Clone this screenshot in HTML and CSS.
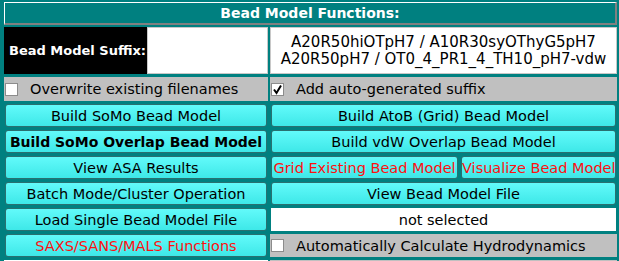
FILE: index.html
```html
<!DOCTYPE html>
<html lang="en">
<head>
    <meta charset="UTF-8">
    <title>Bead Model Functions</title>
    <link rel="stylesheet" href="styles.css">
</head>
<body>
    <div class="panel">
        <div class="panel-title">Bead Model Functions:</div>

        <div class="grid">
            <!-- suffix row -->
            <div class="suffix">
                <div class="suffix-label">Bead Model Suffix:</div>
                <div class="suffix-input"></div>
            </div>
            <div class="suffix-value">
                <div>A20R50hiOTpH7 / A10R30syOThyG5pH7</div>
                <div>A20R50pH7 / OT0_4_PR1_4_TH10_pH7-vdw</div>
            </div>

            <!-- options -->
            <label class="check-row">
                <span class="checkbox"></span>
                <span>Overwrite existing filenames</span>
            </label>
            <label class="check-row">
                <span class="checkbox">
                    <svg width="11" height="11" viewBox="0 0 11 11"><polyline points="2,5.5 4.5,9 9,1.5" fill="none" stroke="#000" stroke-width="2"/></svg>
                </span>
                <span>Add auto-generated suffix</span>
            </label>

            <!-- actions -->
            <button class="btn">Build SoMo Bead Model</button>
            <button class="btn">Build AtoB (Grid) Bead Model</button>

            <button class="btn btn-bold">Build SoMo Overlap Bead Model</button>
            <button class="btn">Build vdW Overlap Bead Model</button>

            <button class="btn">View ASA Results</button>
            <div class="split">
                <button class="btn btn-red btn-grid">Grid Existing Bead Model</button>
                <button class="btn btn-red">Visualize Bead Model</button>
            </div>

            <button class="btn">Batch Mode/Cluster Operation</button>
            <button class="btn">View Bead Model File</button>

            <button class="btn">Load Single Bead Model File</button>
            <div class="file-box">not selected</div>

            <button class="btn btn-red">SAXS/SANS/MALS Functions</button>
            <label class="check-row">
                <span class="checkbox"></span>
                <span>Automatically Calculate Hydrodynamics</span>
            </label>

            <div class="next-row"></div>
            <div class="next-row next-gray"></div>
        </div>
    </div>
</body>
</html>
```

FILE: styles.css
```css
body {
    margin: 0;
    background-color: #008080;
    font-family: "DejaVu Sans", Verdana, sans-serif;
    font-size: 14.5px;
    color: #000000;
    overflow: hidden;
}

.panel {
    padding: 2px 2px 0 4px;
}

.panel-title {
    height: 20px;
    line-height: 20px;
    border-top: 1px solid #ffffff;
    border-left: 1px solid #ffffff;
    border-bottom: 2px solid #808080;
    border-right: 2px solid #808080;
    color: #ffffff;
    font-weight: bold;
    font-size: 14px;
    text-align: center;
    margin-bottom: 2px;
}

.grid {
    display: grid;
    grid-template-columns: 264px 347px;
    grid-template-rows: 47px 24px repeat(6, 23px) 10px;
    column-gap: 2px;
    row-gap: 3px;
}

.suffix {
    display: flex;
}

.suffix-label {
    width: 143px;
    background-color: #000000;
    color: #ffffff;
    font-weight: bold;
    font-size: 13px;
    display: flex;
    align-items: center;
    padding-left: 5px;
    box-sizing: border-box;
    white-space: nowrap;
}

.suffix-input {
    flex: 1;
    background-color: #ffffff;
    border: 1px solid #c8c8c8;
}

.suffix-value {
    background-color: #ffffff;
    border: 1px solid #c8c8c8;
    display: flex;
    flex-direction: column;
    justify-content: center;
    align-items: center;
    font-size: 15px;
    line-height: 17px;
    white-space: nowrap;
}

.check-row {
    background-color: #c0c0c0;
    display: flex;
    align-items: center;
    gap: 12px;
    padding-left: 1px;
    white-space: nowrap;
}

.checkbox {
    width: 11px;
    height: 11px;
    background-color: #ffffff;
    border: 1px solid #8c8c8c;
    display: flex;
    align-items: center;
    justify-content: center;
}

.btn {
    margin: 0 1px;
    height: 23px;
    padding: 0;
    font-family: inherit;
    font-size: 14.5px;
    color: #000000;
    background: linear-gradient(#62fafa, #3ee8e8);
    border: 1px solid #2a7070;
    border-radius: 3px;
    white-space: nowrap;
    overflow: hidden;
}

.btn-bold {
    font-weight: bold;
    font-size: 14px;
}

.btn-red {
    color: #ff1010;
}

.split {
    display: flex;
}

.split .btn {
    flex: 1;
    min-width: 0;
}

.split .btn-grid {
    flex: 0 0 187px;
    margin-right: 2px;
}

.file-box {
    margin: 0 1px;
    background-color: #ffffff;
    display: flex;
    align-items: center;
    justify-content: center;
}

.next-row {
    background-color: #ffffff;
}

.next-gray {
    background-color: #c0c0c0;
}
```
